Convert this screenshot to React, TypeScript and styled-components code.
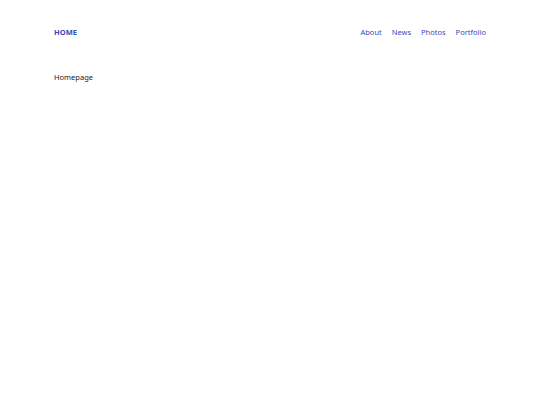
import styled, { createGlobalStyle } from 'styled-components'

const GlobalStyle = createGlobalStyle`
  body {
    margin: 0;
    background: #fff;
    font-family: "Noto Sans", "Open Sans", sans-serif;
  }
`

const Page = styled.div`
  padding: 0 54px;
`

const Header = styled.header`
  display: flex;
  align-items: center;
  justify-content: space-between;
  height: 64px;
`

const Brand = styled.a`
  font-size: 7.5px;
  font-weight: bold;
  color: #3949b8;
  text-decoration: none;
`

const Nav = styled.nav`
  display: flex;
  gap: 10px;
`

const NavLink = styled.a`
  font-size: 7.5px;
  color: #3949b8;
  text-decoration: none;
`

const Content = styled.main`
  padding-top: 8px;
  font-size: 7.5px;
  color: #222;
`

const links = ['About', 'News', 'Photos', 'Portfolio']

export default function App() {
  return (
    <Page>
      <GlobalStyle />
      <Header>
        <Brand href="#">HOME</Brand>
        <Nav>
          {links.map(l => <NavLink key={l} href="#">{l}</NavLink>)}
        </Nav>
      </Header>
      <Content>Homepage</Content>
    </Page>
  )
}
